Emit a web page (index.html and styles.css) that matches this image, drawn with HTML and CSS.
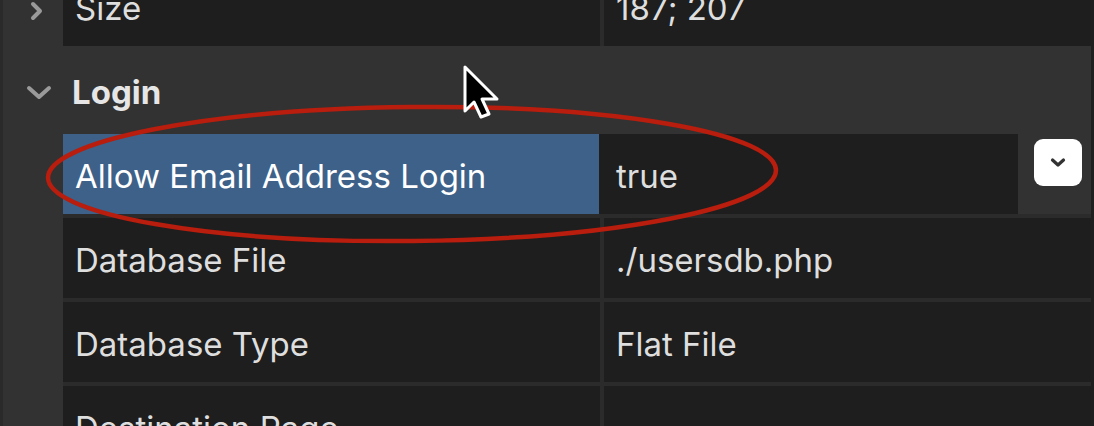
FILE: index.html
```html
<!DOCTYPE html>
<html>

<head>
    <meta charset="utf-8">
    <link rel="stylesheet" href="styles.css">
</head>

<body>
    <div class="inspector">
        <div class="panel">
            <!-- Size (collapsed sub-properties) -->
            <div class="prop first">
                <div class="gutter">
                    <svg class="twisty" width="24" height="24" viewBox="0 0 24 24">
                        <path d="M9 4 L16 11 L9 18" fill="none" stroke="#9a9a9a" stroke-width="4" stroke-linecap="round" stroke-linejoin="round"/>
                    </svg>
                </div>
                <div class="cells">
                    <div class="name">Size</div>
                    <div class="value">187; 207</div>
                </div>
            </div>

            <div class="group">
                <div class="gutter">
                    <svg class="twisty down" width="28" height="20" viewBox="0 0 28 20">
                        <path d="M3 5 L13 14 L23 5" fill="none" stroke="#9a9a9a" stroke-width="4" stroke-linecap="round" stroke-linejoin="round"/>
                    </svg>
                </div>
                <div class="groupTitle">Login</div>
            </div>

            <div class="prop selected">
                <div class="gutter"></div>
                <div class="cells">
                    <div class="name">Allow Email Address Login</div>
                    <div class="value">true</div>
                    <div class="action">
                        <button class="popup" type="button">
                            <svg width="18" height="12" viewBox="0 0 18 12">
                                <path d="M3.5 3 L9 8 L14.5 3" fill="none" stroke="#333" stroke-width="3.2" stroke-linecap="round" stroke-linejoin="round"/>
                            </svg>
                        </button>
                    </div>
                </div>
            </div>

            <div class="prop">
                <div class="gutter"></div>
                <div class="cells">
                    <div class="name">Database File</div>
                    <div class="value">./usersdb.php</div>
                </div>
            </div>

            <div class="prop">
                <div class="gutter"></div>
                <div class="cells">
                    <div class="name">Database Type</div>
                    <div class="value">Flat File</div>
                </div>
            </div>

            <div class="prop">
                <div class="gutter"></div>
                <div class="cells">
                    <div class="name">Destination Page</div>
                    <div class="value"></div>
                </div>
            </div>
        </div>

        <!-- annotation drawn over the screenshot -->
        <svg class="markup" width="1094" height="426" viewBox="0 0 1094 426">
            <ellipse cx="412" cy="174" rx="364" ry="67" fill="none" stroke="#b81d0d" stroke-width="4.5" transform="rotate(-0.6 412 174)"/>
        </svg>

        <svg class="cursor" width="40" height="58" viewBox="0 0 40 58">
            <path d="M3 3 L3 47 L12 38 L19 53 L27 50 L20 35 L35 35 Z" fill="#000" stroke="#fff" stroke-width="3" stroke-linejoin="round"/>
        </svg>
    </div>
</body>

</html>
```

FILE: styles.css
```css
body {
    margin: 0;
    background: #1f1f1f;
    overflow: hidden;
    font-family: Inter, "Noto Sans", sans-serif;
}

.inspector {
    position: relative;
    width: 1094px;
    height: 426px;
    overflow: hidden;
}

.panel {
    width: 1091px;
    background: #323232;
    border-left: 3px solid #2a2a2a;
    box-sizing: border-box;
    margin-top: -34px;
}

.prop {
    display: flex;
}

.gutter {
    width: 60px;
    flex: none;
    background: #323232;
    position: relative;
}

.cells {
    flex: 1;
    display: grid;
    grid-template-columns: 537px 1fr;
    column-gap: 4px;
    height: 80px;
    background: #2b2b2b;
}

.prop + .prop .cells {
    border-top: 4px solid #2b2b2b;
}

.name,
.value {
    background: #1e1e1e;
    color: #dedede;
    font-size: 33px;
    display: flex;
    align-items: center;
    padding-left: 12px;
    padding-top: 3px;
    white-space: nowrap;
    overflow: hidden;
}

.first .twisty {
    position: absolute;
    left: 21px;
    top: 34px;
}

.group {
    display: flex;
    height: 88px;
    align-items: center;
}

.group .gutter {
    height: 88px;
}

.twisty.down {
    position: absolute;
    left: 23px;
    top: 37px;
}

.groupTitle {
    font-size: 33px;
    font-weight: bold;
    color: #e6e6e6;
    padding-left: 9px;
    padding-top: 4px;
}

.selected .cells {
    grid-template-columns: 536px 419px 1fr;
    column-gap: 0;
    background: #323232;
}

.selected .name {
    background: #3d6189;
    color: #ffffff;
}

.selected .value {
    padding-left: 17px;
}

.action {
    background: #323232;
    padding: 5px 0 0 16px;
}

.popup {
    width: 48px;
    height: 47px;
    border: none;
    border-radius: 9px;
    background: #ffffff;
    display: flex;
    align-items: center;
    justify-content: center;
    padding: 0;
}

.markup {
    position: absolute;
    left: 0;
    top: 0;
    pointer-events: none;
}

.cursor {
    position: absolute;
    left: 462px;
    top: 64px;
    pointer-events: none;
}
```
